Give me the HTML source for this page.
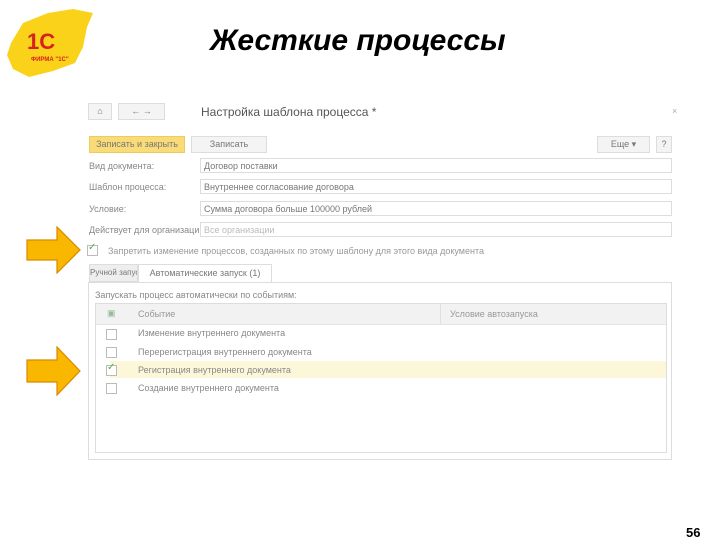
<!DOCTYPE html><html><head><meta charset="utf-8"><style>
body{margin:0;width:720px;height:540px;background:#fff;position:relative;overflow:hidden;font-family:"Liberation Sans",sans-serif;}
.a{position:absolute;}
.t{font-size:9px;color:#888;white-space:nowrap;}
.f{position:absolute;left:200px;width:472px;height:15px;border:1px solid #ddd;background:#fff;box-sizing:border-box;}
.f span{position:absolute;left:3px;top:2px;font-size:9px;color:#777;white-space:nowrap;}
.cb{position:absolute;width:9px;height:9px;border:1px solid #bbb;background:#fff;}
.btn{position:absolute;border:1px solid #ddd;background:#f4f4f4;box-sizing:border-box;font-size:9px;color:#777;text-align:center;line-height:15px;white-space:nowrap;overflow:hidden;}
</style></head><body>
<svg class="a" style="left:3px;top:5px" width="95" height="75" viewBox="0 0 95 75">
<path d="M8 38 L20 18 L45 8 L70 4 L90 8 L84 22 L80 42 L72 58 L50 66 L26 72 L10 64 L4 50Z" fill="#fbd21a"/>
<text x="24" y="44" font-family="Liberation Sans" font-weight="bold" font-size="22" fill="#d6221e">1С</text>
<text x="28" y="56" font-family="Liberation Sans" font-weight="bold" font-size="6" fill="#d6221e">ФИРМА "1С"</text>
</svg>
<div class="a" style="left:210px;top:24px;font-size:30px;font-weight:bold;font-style:italic;color:#000;white-space:nowrap;">Жесткие процессы</div>

<div class="btn" style="left:88px;top:103px;width:24px;height:17px;">⌂</div>
<div class="btn" style="left:118px;top:103px;width:47px;height:17px;">← →</div>
<div class="a" style="left:201px;top:105px;font-size:12px;color:#555;">Настройка шаблона процесса *</div>
<div class="a t" style="left:672px;top:106px;color:#aaa;">×</div>

<div class="btn" style="left:89px;top:136px;width:96px;height:17px;background:#f9dc78;border-color:#eccc60;">Записать и закрыть</div>
<div class="btn" style="left:191px;top:136px;width:76px;height:17px;">Записать</div>
<div class="btn" style="left:597px;top:136px;width:53px;height:17px;">Еще ▾</div>
<div class="btn" style="left:656px;top:136px;width:16px;height:17px;">?</div>

<div class="a t" style="left:89px;top:161px;">Вид документа:</div>
<div class="f" style="top:158px;"><span>Договор поставки</span></div>
<div class="a t" style="left:89px;top:182px;">Шаблон процесса:</div>
<div class="f" style="top:179px;"><span>Внутреннее согласование договора</span></div>
<div class="a t" style="left:89px;top:204px;">Условие:</div>
<div class="f" style="top:201px;"><span>Сумма договора больше 100000 рублей</span></div>
<div class="a t" style="left:89px;top:225px;">Действует для организации:</div>
<div class="f" style="top:222px;"><span style="color:#bbb">Все организации</span></div>

<div class="cb" style="left:87px;top:245px;"></div>
<div class="a" style="left:88px;top:242px;color:#4caf50;font-size:10px;">✓</div>
<div class="a t" style="left:108px;top:246px;color:#999;">Запретить изменение процессов, созданных по этому шаблону для этого вида документа</div>

<div class="btn" style="left:89px;top:264px;width:49px;height:18px;background:#eee;line-height:16px;font-size:8px;">Ручной запуск</div>
<div class="btn" style="left:138px;top:264px;width:134px;height:19px;background:#fff;border-bottom:none;line-height:16px;">Автоматические запуск (1)</div>
<div class="a" style="left:88px;top:282px;width:584px;height:178px;border:1px solid #ddd;box-sizing:border-box;"></div>
<div class="a t" style="left:95px;top:290px;">Запускать процесс автоматически по событиям:</div>
<div class="a" style="left:95px;top:303px;width:572px;height:150px;border:1px solid #ddd;box-sizing:border-box;"></div>
<div class="a" style="left:96px;top:304px;width:570px;height:20px;background:#f2f2f2;border-bottom:1px solid #e4e4e4;"></div>
<div class="a" style="left:440px;top:304px;width:1px;height:20px;background:#e0e0e0;"></div>
<div class="a t" style="left:107px;top:308px;color:#9b9;">▣</div>
<div class="a t" style="left:138px;top:309px;color:#999;">Событие</div>
<div class="a t" style="left:450px;top:309px;color:#999;">Условие автозапуска</div>
<div class="a" style="left:110px;top:361px;width:556px;height:17px;background:#fdf7d9;"></div>
<div class="cb" style="left:106px;top:329px;"></div><div class="a t" style="left:138px;top:328px;">Изменение внутреннего документа</div>
<div class="cb" style="left:106px;top:347px;"></div><div class="a t" style="left:138px;top:347px;">Перерегистрация внутреннего документа</div>
<div class="cb" style="left:106px;top:365px;"></div><div class="a" style="left:107px;top:362px;color:#4caf50;font-size:10px;">✓</div><div class="a t" style="left:138px;top:365px;">Регистрация внутреннего документа</div>
<div class="cb" style="left:106px;top:383px;"></div><div class="a t" style="left:138px;top:383px;">Создание внутреннего документа</div>

<svg class="a" style="left:26px;top:226px" width="56" height="48"><path d="M1 14 H31 V1 L54 24 L31 47 V34 H1Z" fill="#f9b700" stroke="#d88a00" stroke-width="1.2"/></svg>
<svg class="a" style="left:26px;top:346px" width="56" height="50"><path d="M1 14 H31 V1 L54 25 L31 49 V36 H1Z" fill="#f9b700" stroke="#d88a00" stroke-width="1.2"/></svg>

<div class="a" style="left:686px;top:525px;font-size:13px;font-weight:bold;">56</div>
</body></html>
